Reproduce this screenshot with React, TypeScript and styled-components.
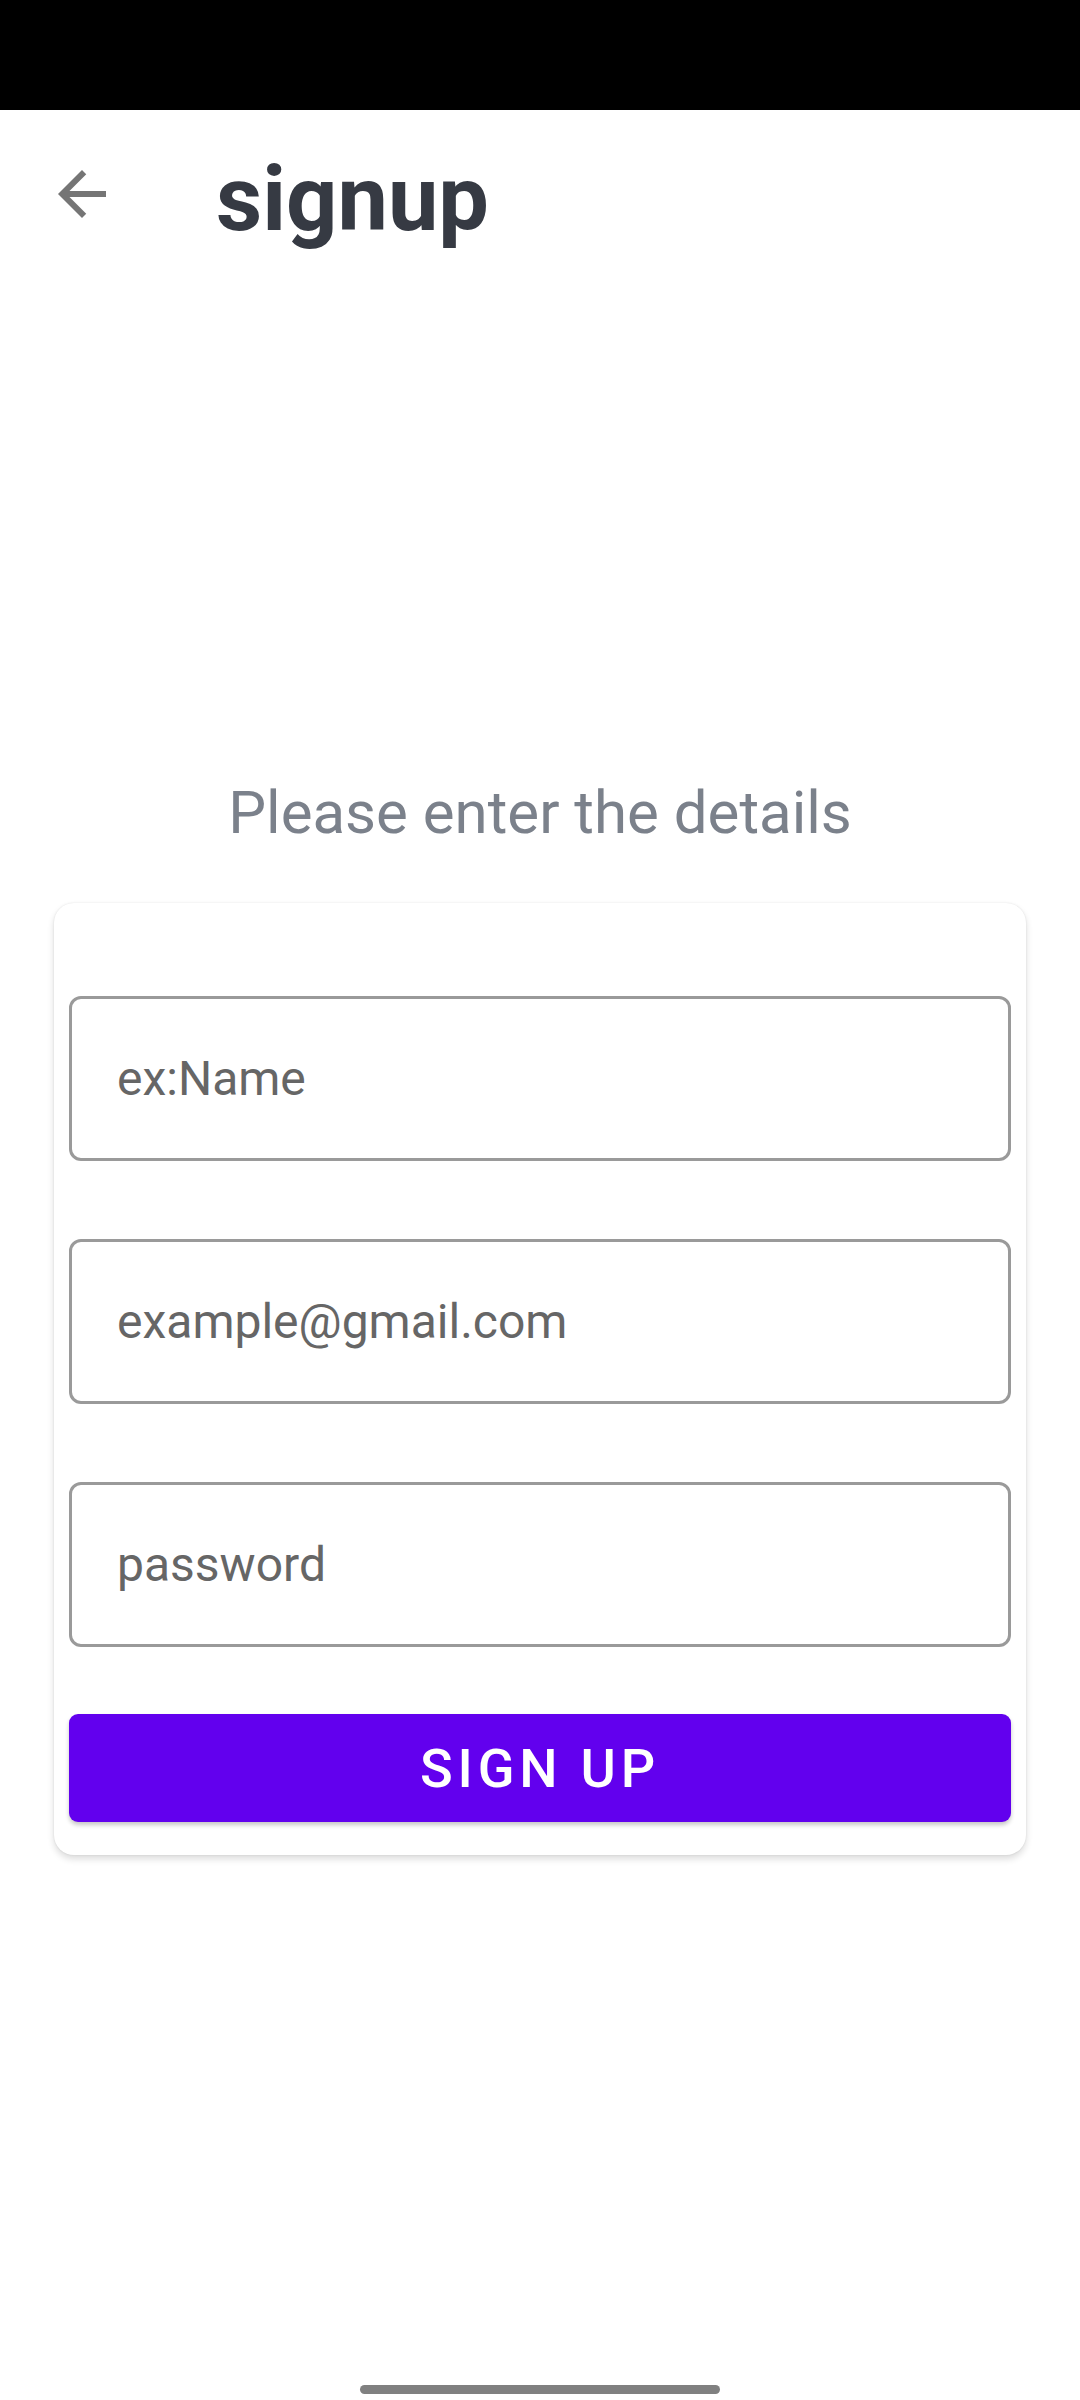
import React from "react";
import styled, { createGlobalStyle } from "styled-components";

const GlobalStyle = createGlobalStyle`
  html, body { margin: 0; padding: 0; background: #ffffff; }
  body { font-family: Roboto, "Noto Sans", "Liberation Sans", sans-serif; }
  * { box-sizing: border-box; }
`;

const Screen = styled.div`
  width: 1080px;
  height: 2400px;
  display: flex;
  flex-direction: column;
  background: #ffffff;
  overflow: hidden;
`;

const StatusBar = styled.div`
  height: 110px;
  flex-shrink: 0;
  background: #000000;
`;

const AppBar = styled.header`
  height: 168px;
  flex-shrink: 0;
  display: flex;
  align-items: center;
  padding-left: 46px;
`;

const BackButton = styled.button`
  width: 72px;
  height: 72px;
  border: 0;
  padding: 0;
  background: none;
  display: flex;
  align-items: center;
  justify-content: center;
  color: #757575;
`;

const Title = styled.h1`
  margin: 10px 0 0 98px;
  font-family: Roboto, "Noto Sans", sans-serif;
  font-size: 90px;
  line-height: 105px;
  font-weight: 700;
  color: #363a43;
`;

const Main = styled.main`
  flex: 1;
  display: flex;
  flex-direction: column;
  align-items: center;
  padding-top: 500px;
`;

const Subtitle = styled.p`
  margin: 0;
  font-family: Roboto, "Noto Sans", sans-serif;
  font-size: 60px;
  line-height: 70px;
  font-weight: 400;
  color: #7b818b;
`;

const Card = styled.form`
  margin-top: 55px;
  width: 972px;
  padding: 93px 15px 33px;
  display: flex;
  flex-direction: column;
  background: #ffffff;
  border-radius: 20px;
  box-shadow: 0 4px 7px rgba(0, 0, 0, 0.14), 0 0 2px rgba(0, 0, 0, 0.1);
`;

const Field = styled.input<{ $gap: number }>`
  height: 165px;
  width: 100%;
  margin-bottom: ${(p) => p.$gap}px;
  border: 3px solid #9a9a9a;
  border-radius: 12px;
  padding: 0 0 0 45px;
  font-family: Roboto, "Noto Sans", sans-serif;
  font-size: 48px;
  color: #444;
  background: #fff;
  outline: none;
  &::placeholder {
    color: #666666;
    opacity: 1;
  }
`;

const SubmitButton = styled.button`
  height: 108px;
  width: 100%;
  border: 0;
  border-radius: 9px;
  background: #6200ee;
  color: #ffffff;
  font-family: Roboto, "Noto Sans", sans-serif;
  font-size: 54px;
  font-weight: 500;
  letter-spacing: 4.8px;
  text-transform: uppercase;
  box-shadow: 0 3px 4px rgba(0, 0, 0, 0.22);
`;

const NavArea = styled.div`
  height: 40px;
  flex-shrink: 0;
  display: flex;
  justify-content: center;
  align-items: flex-end;
  padding-bottom: 6px;
`;

const HomeIndicator = styled.div`
  width: 360px;
  height: 9px;
  border-radius: 5px;
  background: #808080;
`;

const ArrowBack = () => (
  <svg width="72" height="72" viewBox="0 0 24 24" fill="currentColor" aria-hidden="true">
    <path d="M20 11H7.83l5.59-5.59L12 4l-8 8 8 8 1.41-1.41L7.83 13H20v-2z" />
  </svg>
);

export default function App() {
  return (
    <>
      <GlobalStyle />
      <Screen>
        <StatusBar />
        <AppBar>
          <BackButton aria-label="back">
            <ArrowBack />
          </BackButton>
          <Title>signup</Title>
        </AppBar>
        <Main>
          <Subtitle>Please enter the details</Subtitle>
          <Card onSubmit={(e) => e.preventDefault()}>
            <Field $gap={78} type="text" placeholder="ex:Name" />
            <Field $gap={78} type="email" placeholder="example@gmail.com" />
            <Field $gap={67} type="password" placeholder="password" />
            <SubmitButton type="submit">Sign up</SubmitButton>
          </Card>
        </Main>
        <NavArea>
          <HomeIndicator />
        </NavArea>
      </Screen>
    </>
  );
}
